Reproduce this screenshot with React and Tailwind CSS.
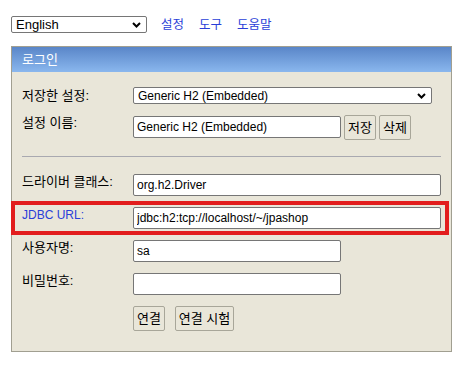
const font = "font-['Liberation_Sans','Noto_Sans_CJK_KR',sans-serif]"

const LINKS = ['설정', '도구', '도움말']

function Chevron() {
  return (
    <svg width="9" height="6" viewBox="0 0 9 6" className="shrink-0">
      <path d="M1 1l3.5 3.5L8 1" fill="none" stroke="#000" strokeWidth="2" />
    </svg>
  )
}

function Select({ value, className }) {
  return (
    <div className={`flex items-center justify-between bg-white border border-[#767676] rounded-[2px] pl-[4px] pr-[5px] ${className}`}>
      <span className="leading-none">{value}</span>
      <Chevron />
    </div>
  )
}

function Field({ value = '', wide }) {
  return (
    <input
      readOnly
      value={value}
      className={`${wide ? 'w-[308px]' : 'w-[208px]'} h-[22px] bg-white border border-[#767676] rounded-[2px] px-[3px] text-[12px] text-black outline-none ${font}`}
    />
  )
}

function Btn({ children, className = '' }) {
  return (
    <button className={`h-[25px] bg-[#e9e6d9] border border-[#a8a699] rounded-[2px] text-[13px] text-black leading-none ${className}`}>
      {children}
    </button>
  )
}

function Row({ label, children, className = '', labelClass = 'text-[13px]' }) {
  return (
    <div className={`relative flex items-start ${className}`}>
      <div className={`w-[111px] leading-4 ${labelClass}`}>{label}</div>
      {children}
    </div>
  )
}

export default function App() {
  return (
    <div className={`w-[462px] h-[381px] bg-white text-[12px] text-black ${font}`}>
      {/* language bar */}
      <div className="flex items-center pl-[11px] pt-[16px]">
        <Select value="English" className="w-[136px] h-[17px] text-[13px]" />
        <nav className="flex gap-[15px] ml-[14px] text-[#2a3fd8] text-[12.5px]">
          {LINKS.map((l) => (
            <a key={l} className="leading-4">{l}</a>
          ))}
        </nav>
      </div>

      {/* login panel */}
      <div className="ml-[11px] mt-[13px] w-[441px] border border-[#a19f91] bg-[#e9e6d9]">
        <div className="h-[25px] flex items-center pl-[10px] bg-gradient-to-b from-[#5a86c8] to-[#8ab7ee] text-white text-[13px]">
          로그인
        </div>

        <div className="px-[10px] pt-[15px] pb-[20px]">
          <Row label="저장한 설정:" labelClass="text-[13px] leading-[17px]">
            <Select value="Generic H2 (Embedded)" className="w-[299px] h-[17px] text-[12px]" />
          </Row>

          <Row label="설정 이름:" className="mt-[11px]">
            <div className="mt-[1px]">
              <Field value="Generic H2 (Embedded)" />
            </div>
            <div className="flex gap-[3px] ml-[3px]">
              <Btn className="w-[32px]">저장</Btn>
              <Btn className="w-[32px]">삭제</Btn>
            </div>
          </Row>

          <div className="mt-[16px] h-px bg-[#a9a9b0]" />

          <div className="mt-[17px] flex flex-col gap-[11px]">
            <Row label="드라이버 클래스:">
              <Field value="org.h2.Driver" wide />
            </Row>
            <Row label="JDBC URL:" labelClass="text-[12px] text-[#2a3fd8]">
              <Field value="jdbc:h2:tcp://localhost/~/jpashop" wide />
              {/* highlight box */}
              <div className="absolute -left-[11px] -right-[8px] -top-[6px] -bottom-[6px] border-4 border-[#e21d1d] pointer-events-none" />
            </Row>
            <Row label="사용자명:">
              <Field value="sa" />
            </Row>
            <Row label="비밀번호:">
              <Field />
            </Row>
            <div className="flex gap-[10px] pl-[111px]">
              <Btn className="w-[32px]">연결</Btn>
              <Btn className="w-[59px]">연결 시험</Btn>
            </div>
          </div>
        </div>
      </div>
    </div>
  )
}
